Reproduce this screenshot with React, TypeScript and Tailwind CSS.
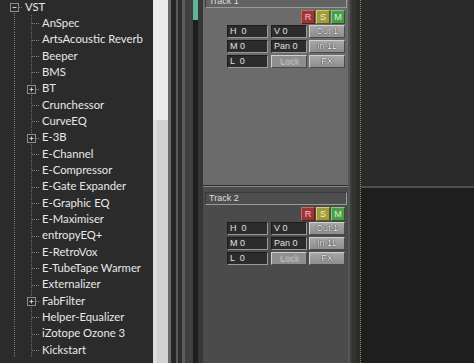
import React from 'react';

const plugins: { name: string; expand?: boolean }[] = [
    { name: 'AnSpec' },
    { name: 'ArtsAcoustic Reverb' },
    { name: 'Beeper' },
    { name: 'BMS' },
    { name: 'BT', expand: true },
    { name: 'Crunchessor' },
    { name: 'CurveEQ' },
    { name: 'E-3B', expand: true },
    { name: 'E-Channel' },
    { name: 'E-Compressor' },
    { name: 'E-Gate Expander' },
    { name: 'E-Graphic EQ' },
    { name: 'E-Maximiser' },
    { name: 'entropyEQ+' },
    { name: 'E-RetroVox' },
    { name: 'E-TubeTape Warmer' },
    { name: 'Externalizer' },
    { name: 'FabFilter', expand: true },
    { name: 'Helper-Equalizer' },
    { name: 'iZotope Ozone 3' },
    { name: 'Kickstart' },
];

const dots = '1 1';

function RootConnector() {
    return (
        <svg width="42" height="16.33" viewBox="0 0 42 16.33" className="shrink-0">
            <line x1="14.5" y1="12" x2="14.5" y2="16.33" stroke="#7a7a7a" strokeDasharray={dots} />
            <line x1="19" y1="8.5" x2="23" y2="8.5" stroke="#7a7a7a" strokeDasharray={dots} />
            <rect x="10.5" y="4.5" width="8" height="8" fill="#2b2b2b" stroke="#8c8c8c" />
            <line x1="12.5" y1="8.5" x2="16.5" y2="8.5" stroke="#d0d0d0" />
        </svg>
    );
}

function ChildConnector({ expand }: { expand?: boolean }) {
    return (
        <svg width="42" height="16.33" viewBox="0 0 42 16.33" className="shrink-0">
            <line x1="14.5" y1="0" x2="14.5" y2="16.33" stroke="#7a7a7a" strokeDasharray={dots} />
            <line x1="31.5" y1="0" x2="31.5" y2="16.33" stroke="#6a6a6a" strokeDasharray={dots} />
            <line x1={expand ? 36 : 32} y1="8.5" x2="40" y2="8.5" stroke="#8a8a8a" strokeDasharray={dots} />
            {expand && (
                <>
                    <rect x="27.5" y="4.5" width="8" height="8" fill="#2b2b2b" stroke="#8c8c8c" />
                    <line x1="29.5" y1="8.5" x2="33.5" y2="8.5" stroke="#d0d0d0" />
                    <line x1="31.5" y1="6.5" x2="31.5" y2="10.5" stroke="#d0d0d0" />
                </>
            )}
        </svg>
    );
}

function PluginTree() {
    return (
        <div className="w-[153px] shrink-0 bg-[#2b2b2b] overflow-hidden font-['Lato',sans-serif] text-[11.3px] text-[#e8e8e8]">
            <div className="-mt-[1px]">
                <div className="flex items-center h-[16.33px]">
                    <RootConnector />
                    <span className="-ml-[17px]">VST</span>
                </div>
                {plugins.map((p) => (
                    <div key={p.name} className="flex items-center h-[16.33px] whitespace-nowrap">
                        <ChildConnector expand={p.expand} />
                        <span>{p.name}</span>
                    </div>
                ))}
            </div>
        </div>
    );
}

function Field({ label, w }: { label: string; w: string }) {
    return (
        <div className={`${w} h-[13px] bg-[#2c2c2c] border border-t-[#1c1c1c] border-l-[#1c1c1c] border-b-[#9a9a9a] border-r-[#9a9a9a] pl-[2px] leading-[11px] text-[#e0e0e0] whitespace-pre`}>
            {label}
        </div>
    );
}

function GrayButton({ label, disabled }: { label: string; disabled?: boolean }) {
    return (
        <div
            className={`w-[36px] h-[13px] border border-t-[#cfcfcf] border-l-[#cfcfcf] border-b-[#4a4a4a] border-r-[#4a4a4a] flex items-center justify-center leading-none ${
                disabled
                    ? 'bg-[#8e8e8e] text-[#a9a9a9] [text-shadow:1px_1px_0_#c4c4c4]'
                    : 'bg-gradient-to-b from-[#a8a8a8] to-[#8e8e8e] text-[#f4f4f4] [text-shadow:0_0_1px_#222,0_0_1px_#222]'
            }`}
        >
            {label}
        </div>
    );
}

function Track({ name, selected, first }: { name: string; selected?: boolean; first?: boolean }) {
    return (
        <div
            className={`h-[196px] shrink-0 flex flex-col pl-[2px] pr-[1px] pt-[5px] border-b border-[#2a2a2a] ${
                selected ? 'bg-[#6b6b6b]' : 'bg-[#4b4b4b] border-t border-t-[#8a8a8a]'
            } ${first ? '-mt-[10px]' : ''}`}
        >
            <div
                className={`h-[13px] border border-t-[#3a3a3a] border-l-[#3a3a3a] border-b-[#9a9a9a] border-r-[#9a9a9a] pl-[3px] leading-[11px] text-[#dedede] ${
                    selected ? 'bg-[#626262]' : 'bg-[#4e4e4e]'
                }`}
            >
                {name}
            </div>
            <div className="flex justify-end gap-[1px] mt-[2px] pr-[2px]">
                <div className="w-[14px] h-[14px] bg-[#9e3636] border border-[#c66a6a] border-b-[#5a2020] border-r-[#5a2020] flex items-center justify-center text-[#f2c8c8] text-[9px] leading-none">R</div>
                <div className="w-[14px] h-[14px] bg-[#a09c3c] border border-[#cfcb76] border-b-[#5a5820] border-r-[#5a5820] flex items-center justify-center text-[#f2f2d0] text-[9px] leading-none">S</div>
                <div className="w-[14px] h-[14px] bg-[#4b9d48] border border-[#86c883] border-b-[#255a22] border-r-[#255a22] flex items-center justify-center text-[#d8f5d6] text-[9px] leading-none">M</div>
            </div>
            <div className="flex flex-col gap-[2px] pl-[22px] mt-[1px]">
                <div className="flex">
                    <Field label="H  0" w="w-[41px]" />
                    <div className="w-[3px]" />
                    <Field label="V 0" w="w-[36px]" />
                    <div className="w-[2px]" />
                    <GrayButton label="Out 1" />
                </div>
                <div className="flex">
                    <Field label="M 0" w="w-[41px]" />
                    <div className="w-[3px]" />
                    <Field label="Pan 0" w="w-[36px]" />
                    <div className="w-[2px]" />
                    <GrayButton label="In 1L" />
                </div>
                <div className="flex">
                    <Field label="L  0" w="w-[41px]" />
                    <div className="w-[3px]" />
                    <GrayButton label="Lock" disabled />
                    <div className="w-[2px]" />
                    <GrayButton label="FX" />
                </div>
            </div>
        </div>
    );
}

export default function App() {
    return (
        <div className="w-[474px] h-[363px] overflow-hidden flex bg-[#2a2a2a] font-['Liberation_Sans',Arial,sans-serif] text-[9px]">
            <PluginTree />

            {/* Scrollbar */}
            <div className="w-[15px] shrink-0 flex flex-col">
                <div className="h-[120px] bg-[#ececec]" />
                <div className="flex-1 bg-[#d2d2d2] border-l-[4px] border-[#dedede]" />
            </div>

            {/* Splitter strips */}
            <div className="w-[3px] shrink-0 bg-[#6a6a6a]" />
            <div className="w-[5px] shrink-0 bg-[#262626]" />
            <div className="w-[2px] shrink-0 bg-[#5a5a5a]" />
            <div className="w-[4px] shrink-0 bg-[#2e2e2e]" />
            <div className="w-[3px] shrink-0 bg-[#5c5c5c]" />
            <div className="w-[8px] shrink-0 bg-[#404040]" />
            <div className="w-[5px] shrink-0 flex flex-col bg-[#1e1e1e]">
                <div className="h-[20px] bg-[#5fb596]" />
            </div>
            <div className="w-[5px] shrink-0 bg-[#363636]" />

            {/* Tracks */}
            <div className="w-[145px] shrink-0 flex flex-col">
                <Track name="Track 1" selected first />
                <Track name="Track 2" />
            </div>
            <div className="w-[4px] shrink-0 bg-[#555555] border-r-[2px] border-[#3c3c3c]" />
            <div className="w-[4px] shrink-0 bg-[#333333]" />
            <div className="w-[4px] shrink-0 bg-[#2c2c2c]" />

            {/* Arrange view */}
            <div className="flex-1 flex flex-col border-l border-dotted border-[#8f8f55]">
                <div className="h-[186px] bg-[#2a2a2a]" />
                <div className="h-[2px] bg-[#4e4e4e]" />
                <div className="flex-1 bg-[#1e1e1e]" />
            </div>
        </div>
    );
}
